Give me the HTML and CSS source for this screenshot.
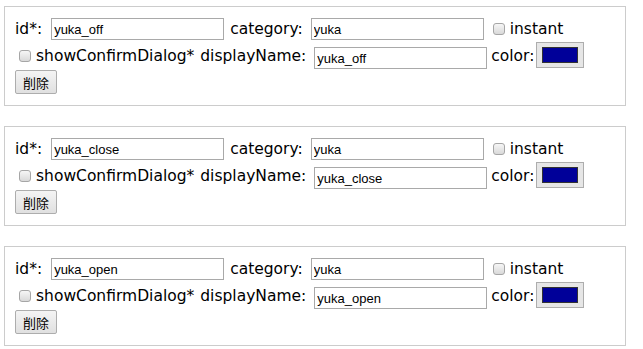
FILE: index.html
```html
<!DOCTYPE HTML><html>
<head>
  <title>Buttons</title>
  <meta name="viewport" content="width=device-width, initial-scale=1">
  <link rel="stylesheet" href="styles.css">
</head>
<body>
  <div class="item">
    <div class="row">
      <label class="lbl id">id*:</label><input class="field" type="text" value="yuka_off">
      <label class="lbl gap">category:</label><input class="field" type="text" value="yuka">
      <label class="check gap"><input type="checkbox">instant</label>
    </div>
    <div class="row row2">
      <label class="check first"><input type="checkbox">showConfirmDialog*</label>
      <label class="lbl gap">displayName:</label><input class="field" type="text" value="yuka_off">
      <label class="lbl gap2">color:</label><input class="color" type="color" value="#000099">
    </div>
    <button class="remove">削除</button>
  </div>

  <div class="item">
    <div class="row">
      <label class="lbl id">id*:</label><input class="field" type="text" value="yuka_close">
      <label class="lbl gap">category:</label><input class="field" type="text" value="yuka">
      <label class="check gap"><input type="checkbox">instant</label>
    </div>
    <div class="row row2">
      <label class="check first"><input type="checkbox">showConfirmDialog*</label>
      <label class="lbl gap">displayName:</label><input class="field" type="text" value="yuka_close">
      <label class="lbl gap2">color:</label><input class="color" type="color" value="#000099">
    </div>
    <button class="remove">削除</button>
  </div>

  <div class="item">
    <div class="row">
      <label class="lbl id">id*:</label><input class="field" type="text" value="yuka_open">
      <label class="lbl gap">category:</label><input class="field" type="text" value="yuka">
      <label class="check gap"><input type="checkbox">instant</label>
    </div>
    <div class="row row2">
      <label class="check first"><input type="checkbox">showConfirmDialog*</label>
      <label class="lbl gap">displayName:</label><input class="field" type="text" value="yuka_open">
      <label class="lbl gap2">color:</label><input class="color" type="color" value="#000099">
    </div>
    <button class="remove">削除</button>
  </div>
</body>
</html>
```

FILE: styles.css
```css
body {margin: 0; padding: 6px 0 0 4px; font-family: "DejaVu Sans", sans-serif; font-size: 15.5px; color: #000; background: #fff;}
.item {width: 600px; border: 1px solid #ccc; padding: 10px 10px 11px 10px; margin-bottom: 20px;}
.row {display: flex; align-items: center; height: 24px;}
.row2 {height: 28px; padding-top: 1px;}
.lbl {margin-right: 8px;}
.id {margin-right: 9px;}
.gap {margin-left: 6px;}
.gap2 {margin-left: 4px; margin-right: 2px;}
.field {width: 173px; height: 22px; box-sizing: border-box; border: 1px solid #a9a9a9; padding: 1px 2px; font-family: "Liberation Sans", Arial, sans-serif; font-size: 13px; color: #000; margin: 0;}
.row2 .field {margin-top: 4px;}
.check {display: flex; align-items: center;}
.check input {appearance: none; -webkit-appearance: none; width: 12px; height: 12px; margin: 0 5px 0 3px; border: 1px solid #a6a6a6; border-radius: 3px; background: linear-gradient(#f6f6f6, #d9d9d9); box-sizing: border-box;}
.first input {margin-left: 4px;}
.color {-webkit-appearance: none; appearance: none; width: 48px; height: 26px; box-sizing: border-box; border: 1px solid #adadad; background: #e6e6e6; padding: 0; margin: 0 0 3px 0;}
.color::-webkit-color-swatch-wrapper {padding: 4px 5px;}
.color::-webkit-color-swatch {border: 1px solid #333;}
.remove {width: 42px; height: 24px; margin: 0; padding: 0; border: 1px solid #adadad; border-radius: 2px; background: linear-gradient(#f4f4f4, #e0e0e0); font-family: "Noto Sans CJK JP", sans-serif; font-size: 13px; color: #000;}
```
